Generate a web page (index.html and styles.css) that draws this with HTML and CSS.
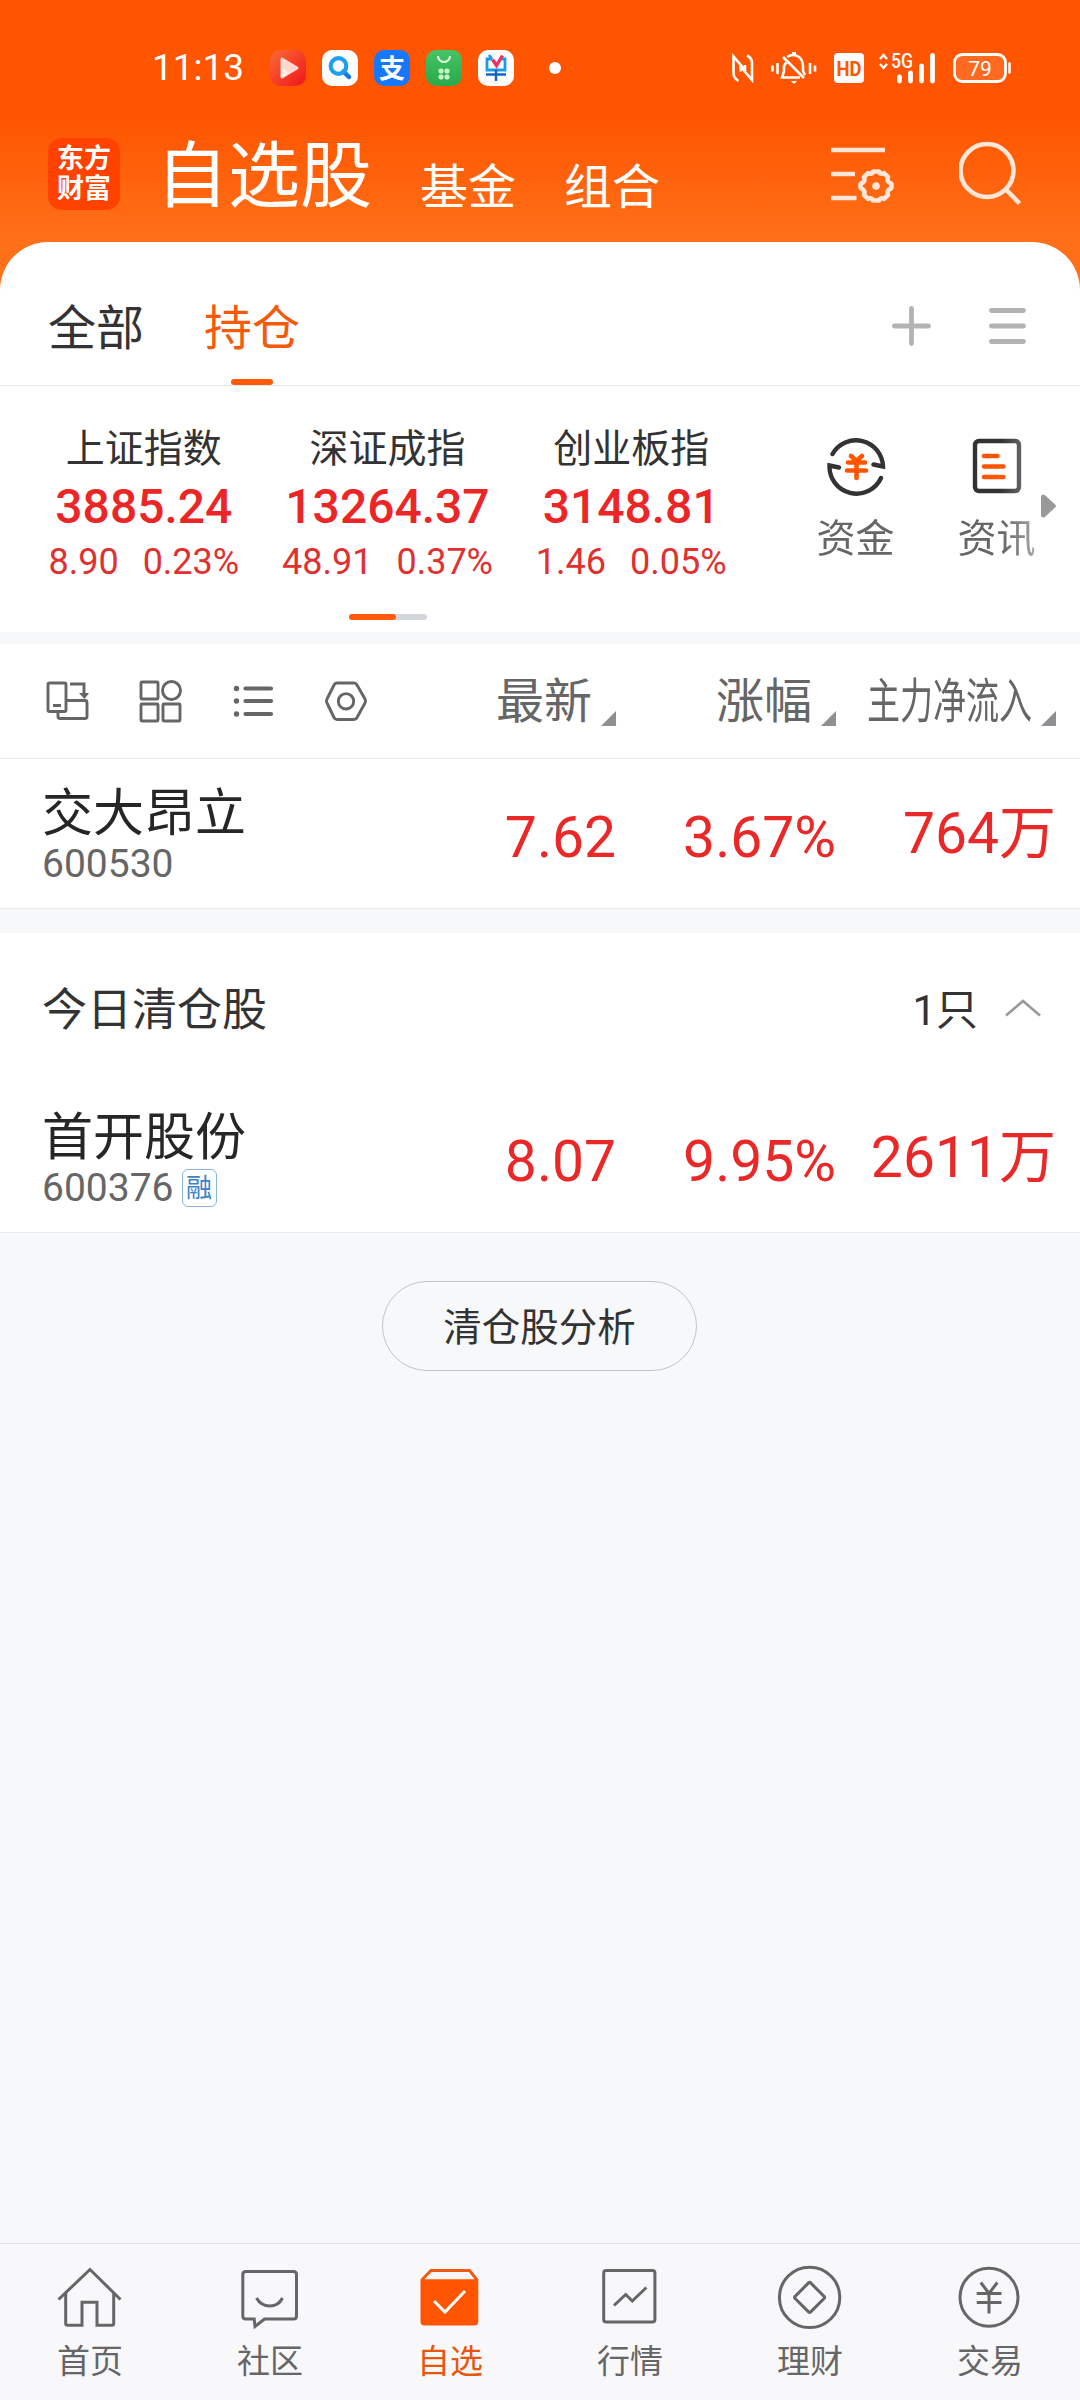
FILE: index.html
```html
<!DOCTYPE html>
<html lang="zh-CN">
<head>
<meta charset="utf-8">
<title>自选股</title>
<link rel="stylesheet" href="styles.css">
</head>
<body>
<div class="app">
  <div class="status">
    <span class="time">11:13</span>
    <div class="apps">
      <svg width="36" height="36" viewBox="0 0 36 36"><defs><linearGradient id="red" x1="0" y1="0" x2="1" y2="1"><stop offset="0" stop-color="#fb6a35"/><stop offset="1" stop-color="#f0151c"/></linearGradient><linearGradient id="grn" x1="0" y1="0" x2="0" y2="1"><stop offset="0" stop-color="#45c565"/><stop offset="1" stop-color="#2aa84c"/></linearGradient></defs><rect width="36" height="36" rx="10" fill="url(#red)"/><path d="M12 9 27 18 12 27Z" fill="#ffd9cf" stroke="#ffd9cf" stroke-width="3" stroke-linejoin="round"/><path d="M11 17 19 23 12 28Z" fill="#fff" opacity=".5"/></svg>
      <svg width="36" height="36" viewBox="0 0 36 36"><rect width="36" height="36" rx="10" fill="#fdfdfd"/><path d="m21.500 21.500 5.500 5.500" stroke="#1379e0" stroke-width="4.500" stroke-linecap="round"/><circle cx="16.500" cy="16" r="7.800" fill="none" stroke="#1ea0ee" stroke-width="4.200"/></svg>
      <svg width="36" height="36" viewBox="0 0 36 36"><rect width="36" height="36" rx="10" fill="#1677ff"/><text x="18" y="27.500" text-anchor="middle" class="pay-text">支</text></svg>
      <svg width="36" height="36" viewBox="0 0 36 36"><rect width="36" height="36" rx="10" fill="url(#grn)"/><path d="M12 6a6 6 0 0 0 12 0" fill="none" stroke="#e6f9e4" stroke-width="2"/><g fill="#c5f5c6"><rect x="12.500" y="18.500" width="5" height="5" rx="2"/><rect x="18.500" y="18.500" width="5" height="5" rx="2"/><rect x="12.500" y="24.500" width="5" height="5" rx="2"/><rect x="18.500" y="24.500" width="5" height="5" rx="2"/></g></svg>
      <svg width="36" height="36" viewBox="0 0 36 36"><rect width="36" height="36" rx="10" fill="#fff"/><path d="M14 9H9v11h18V9h-3M11 5l3 4" fill="none" stroke="#189be8" stroke-width="2.800"/><path d="M8 24.500H28M18 19.500V31" stroke="#1263c8" stroke-width="2.500"/><path d="m14.500 9.500 4 6 6-10" fill="none" stroke="#f03064" stroke-width="3.400"/></svg>
    </div>
    <i class="dot"></i>
    <div class="signals">
      <svg class="nfc" width="22" height="30" viewBox="0 0 22 30"><path d="M6.500 28Q1.500 25 1.500 20V3.500L13 17V12M15 2.500Q20 5 20 10V27L8.500 13.500V18.500" fill="none" stroke="#fff" stroke-width="2.600"/></svg>
      <svg class="bell" width="46" height="32" viewBox="0 0 46 32"><g fill="none" stroke="#fff" stroke-width="2.600"><path d="M1.500 13.500v6M6.500 11v11M39 11v11M44 13.500v6M16 5Q22 1 28 5 32 8 32 15V19L34 23M16 9 13 14V19L11 25.500H29M12 5 33 26"/></g><path d="M20 29h6l-3 3zM21 0h4v4h-4z" fill="#fff"/></svg>
      <svg class="hd" width="30" height="30" viewBox="0 0 30 30"><rect width="30" height="30" rx="4" fill="#fff"/><text x="15" y="23" text-anchor="middle" textLength="25" lengthAdjust="spacingAndGlyphs" class="hd-text">HD</text></svg>
      <svg class="net" width="57" height="31" viewBox="0 0 57 31"><path d="m1 6 3.500-4L8 6M1 11l3.500 4L8 11" fill="none" stroke="#fff" stroke-width="2.400"/><text x="12" y="14.500" textLength="22" lengthAdjust="spacingAndGlyphs" class="net-text">5G</text><path d="M20.500 24v4M31.500 20v8M42.500 13v15M53.500 2.500v25.500" stroke="#fff" stroke-width="4.800" stroke-linecap="round"/></svg>
      <svg class="battery" width="58" height="30" viewBox="0 0 58 30"><rect x="1.500" y="1.500" width="51" height="27" rx="8" fill="#ff6a20" stroke="#fff" stroke-width="2.800"/><path d="M56.500 10.500v9" stroke="#fff" stroke-width="2.500" stroke-linecap="round"/><text x="27" y="22.500" text-anchor="middle" class="bat-text">79</text></svg>
    </div>
  </div>

  <header class="header">
    <div class="logo"><span>东方</span><span>财富</span></div>
    <span class="title">自选股</span>
    <span class="head-tab">基金</span>
    <span class="head-tab">组合</span>
    <div class="head-icons">
      <svg width="64" height="60" viewBox="0 0 64 60" fill="none" stroke="#ffe6d8" stroke-width="4.600"><path d="M0 6H54M0 30H24M0 54H25.500"/><path stroke-width="4.600" stroke-linejoin="round" d="M37 29.200Q41 31 42 27.500H48Q49 31 53 29.200L57 33Q55.500 36.500 58 38.500 61 39.500 60.500 42 61 44.500 58 45.500 55.500 47.500 57 51L53 54.800Q49 53 48 56.500H42Q41 53 37 54.800L33 51Q34.500 47.500 32 45.500 29 44.500 29.500 42 29 39.500 32 38.500 34.500 36.500 33 33Z"/><circle cx="45" cy="42" r="3.800" fill="#ffe6d8" stroke="none"/></svg>
      <svg width="64" height="66" viewBox="0 0 64 66" fill="none" stroke="#ffe6d8" stroke-width="4.600"><circle cx="28" cy="30.500" r="26.500"/><path d="m47 49.500 13.500 14"/></svg>
    </div>
  </header>

  <main>
    <nav class="tabs">
      <span class="tab">全部</span>
      <span class="tab active">持仓</span>
      <svg class="tab-icons" width="136" height="40" viewBox="0 0 136 40" stroke="#b3b3b3" stroke-width="4.800" stroke-linecap="round"><path d="M2.400 20H36.500M19.500 2.500V37.500M99.400 4.500H131.500M99.400 20H131.500M99.400 35.500H131.500"/></svg>
    </nav>

    <section class="market">
      <div class="indexes">
        <div class="index"><span class="index-name">上证指数</span><b>3885.24</b><p><span>8.90</span><span>0.23%</span></p></div>
        <div class="index"><span class="index-name">深证成指</span><b>13264.37</b><p><span>48.91</span><span>0.37%</span></p></div>
        <div class="index"><span class="index-name">创业板指</span><b>3148.81</b><p><span>1.46</span><span>0.05%</span></p></div>
        <div class="pager"><i></i></div>
      </div>
      <div class="shortcuts">
        <div class="shortcut">
          <svg width="60" height="60" viewBox="0 0 60 60" fill="none" stroke="#333" stroke-width="4.400" stroke-linecap="round"><path d="M6.500 18A27 27 0 0 1 57 30.500L47.500 28.500M55 42A27 27 0 0 1 3.500 29.500L13 31.500"/><path stroke="#ff5500" stroke-width="4.600" d="m25 20 5.500 5 5.500-5M22 26.500H39M21 34.500H40M30.500 26V42"/></svg>
          <span>资金</span>
        </div>
        <div class="shortcut">
          <svg width="60" height="60" viewBox="0 0 60 60" fill="none" stroke="#333" stroke-width="4.400"><rect x="8" y="5" width="44" height="50" rx="4"/><path stroke="#ff5500" stroke-width="4.600" stroke-linecap="round" d="M17 20H30.500M17 30.500H36.500M17 41H36.500"/></svg>
          <span>资讯</span>
        </div>
      </div>
      <svg class="more" width="15" height="24" viewBox="0 0 15 24"><path d="M0 2Q2-1 5 2L14 10.500Q16 12 14 13.500L5 22Q2 25 0 22Z" fill="#999"/></svg>
    </section>

    <section class="holdings">
      <div class="cols list-head">
        <svg class="tools" width="324" height="44" viewBox="0 0 324 44" fill="none" stroke="#666" stroke-width="2.900"><rect x="2" y="4" width="18" height="28.500" rx="1.500"/><path d="M7 26.500H15M24 5H38V15M21 21.500H39Q41 21.500 41 23.500V37.500Q41 39.500 39 39.500H14Q12 39.500 12 37.500V33"/><path d="M33 14H43L38.500 20Z" fill="#666" stroke="none"/><rect x="95" y="3" width="17" height="17" rx="1"/><circle cx="125.500" cy="11.500" r="9"/><rect x="95" y="25" width="17" height="17" rx="1"/><rect x="117" y="25" width="17" height="17" rx="1"/><g stroke-width="4.200" stroke-linecap="round"><path d="M199.500 9.500H225M199.500 22H225M199.500 35H225"/></g><g fill="#666" stroke="none"><circle cx="190.500" cy="9.500" r="2.700"/><circle cx="190.500" cy="22" r="2.700"/><circle cx="190.500" cy="35" r="2.700"/></g><path stroke-linejoin="round" d="M291 4H308Q310 4 311 6L319 20Q320 22 319 24L311 38.500Q310 40.500 308 40.500H291Q289 40.500 288 38.500L281 24Q280 22 281 20L288 6Q289 4 291 4Z"/><circle cx="300" cy="22.300" r="7.700"/></svg>
        <div class="col-name"><span>最新</span><i class="sort"></i></div>
        <div class="col-name"><span>涨幅</span><i class="sort"></i></div>
        <div class="col-name"><div class="squeeze"><span>主力净流入</span></div><i class="sort"></i></div>
      </div>
      <div class="cols stock">
        <div class="who"><span class="stock-name">交大昂立</span><div class="code">600530</div></div>
        <span class="val">7.62</span><span class="val">3.67%</span><span class="val flow">764万</span>
      </div>
    </section>

    <section class="cleared">
      <div class="cleared-head"><span>今日清仓股</span><span class="count">1只</span><svg width="36" height="18" viewBox="0 0 36 18" fill="none" stroke="#999" stroke-width="2.600"><path d="M1 16.500 18 2 35 16.500"/></svg></div>
      <div class="cols stock">
        <div class="who"><span class="stock-name">首开股份</span><div class="code">600376<span class="badge">融</span></div></div>
        <span class="val">8.07</span><span class="val">9.95%</span><span class="val flow">2611万</span>
      </div>
    </section>

    <button class="analyse">清仓股分析</button>
  </main>

  <footer class="nav">
    <div class="nav-item"><svg viewBox="0 0 180 96"><path d="M58.500 55.500 90 25.500 120.500 55.500M65.700 49V79.500Q65.700 81.300 67.500 81.300H82V58.300H97V81.300H112Q113.700 81.300 113.700 79.500V49"/></svg><span>首页</span></div>
    <div class="nav-item"><svg viewBox="0 0 180 96"><path d="M66 27.500H113.500Q116.500 27.500 116.500 30.500V72Q116.500 75 113.500 75H84.500L75 82.500 74.200 75H66Q62.800 75 62.800 72V30.500Q62.800 27.500 66 27.500ZM76.500 54Q81 62 89.700 62 98.500 62 102.500 54"/></svg><span>社区</span></div>
    <div class="nav-item on"><svg viewBox="0 0 180 96"><path d="M61.800 36 71 26.400H109.500L117 36" fill="none" stroke="#f05a10"/><path d="M60.500 35.300H118.300V77.500Q118.300 81.500 114.300 81.500H64.500Q60.500 81.500 60.500 77.500Z" fill="#ff5500" stroke="none"/><path d="M74 57 85 68 105 47" stroke="#fff"/></svg><span>自选</span></div>
    <div class="nav-item"><svg viewBox="0 0 180 96"><rect x="63.700" y="26.500" width="51.200" height="51.500" rx="2.500"/><path d="M74 61.500 85.700 50.500 92.300 57 106.400 43.500"/></svg><span>行情</span></div>
    <div class="nav-item"><svg viewBox="0 0 180 96"><circle cx="89.600" cy="53.400" r="30.200"/><rect x="78.600" y="42.400" width="22" height="22" rx="1.500" transform="rotate(45 89.600 53.400)"/></svg><span>理财</span></div>
    <div class="nav-item"><svg viewBox="0 0 180 96"><circle cx="89" cy="53.300" r="29"/><path d="M80.800 38.500 89 49.500 97.300 38.500M76.700 49.500H101.500M76.700 58.500H101.500M89 49V69.500"/></svg><span>交易</span></div>
  </footer>
</div>
</body>
</html>
```

FILE: styles.css
```css
* { box-sizing: border-box; margin: 0; padding: 0; }
body { font-family: Roboto, "Noto Sans CJK SC", sans-serif; color: #333; }
svg { display: block; flex: none; }
.app {
  width: 1080px; height: 2400px; display: flex; flex-direction: column; overflow: hidden;
  background: linear-gradient(#ff5500 0, #ff5500 118px, #ff7019 240px) 0 0 / 100% 300px no-repeat, #f7f8fa;
}

/* status bar */
.status { height: 136px; display: flex; align-items: center; padding: 0 69px 0 152px; }
.time { width: 118px; font-size: 37px; line-height: 44px; color: #fff; }
.apps { display: flex; gap: 16px; }
.dot { width: 12px; height: 12px; border-radius: 50%; background: #fff; margin-left: 35px; }
.signals { display: flex; align-items: center; margin-left: auto; }
.bell { margin-left: 17px; }
.hd { margin-left: 17px; }
.net { margin-left: 15px; overflow: visible; }
.battery { margin-left: 17px; }
.pay-text { font-size: 26px; font-weight: 700; fill: #fff; }
.hd-text { font-size: 21px; font-weight: 700; fill: #ff5500; }
.net-text { font-size: 20px; fill: #fff; font-weight: 500; }
.bat-text { font-size: 21px; fill: #fff; }

/* header */
.header { height: 106px; display: flex; align-items: flex-start; padding: 0 57px 0 48px; color: #fff; }
.logo {
  width: 72px; height: 72px; margin-top: 2px; border-radius: 14px; background: #ff4200;
  display: flex; flex-direction: column; align-items: center; justify-content: center;
  font-size: 27px; line-height: 30px; font-weight: 700;
}
.title { margin-left: 36px; padding-top: 1px; font-size: 72px; line-height: 80px; }
.head-tab { margin-left: 48px; padding-top: 22px; font-size: 48px; line-height: 60px; }
.head-icons { margin-left: auto; display: flex; gap: 64px; padding-top: 8px; }
.head-icons svg:last-child { margin-top: -4px; }

/* white sheet */
main { flex: 1; display: flex; flex-direction: column; }
.tabs {
  height: 144px; display: flex; align-items: center; padding: 0 52px 0 48px; gap: 60px;
  background: #fff; border-radius: 48px 48px 0 0; border-bottom: 1px solid #e6e6e6;
}
.tab { position: relative; height: 143px; font-size: 48px; line-height: 173px; }
.tab.active { color: #f55a0a; }
.tab.active::after {
  content: ""; position: absolute; left: 27px; bottom: 0; width: 42px; height: 6px;
  border-radius: 3px; background: #ff5a0a;
}
.tab-icons { margin: 24px 0 0 auto; }

.market { position: relative; height: 246px; display: flex; padding: 38px 0 0 22px; background: #fff; }
.indexes { width: 731px; display: grid; grid-template-columns: repeat(3, 1fr); align-content: start; }
.index { display: flex; flex-direction: column; align-items: center; }
.index-name { font-size: 39px; line-height: 50px; }
.index b { margin-top: 5px; font-size: 48px; line-height: 56px; font-weight: 500; color: #ec2626; }
.index p { margin-top: 5px; display: flex; gap: 24px; font-size: 36px; line-height: 44px; color: #e03030; }
.pager { grid-column: 1 / -1; justify-self: center; width: 78px; height: 6px; margin-top: 30px; border-radius: 3px; background: #d3d7dd; }
.pager i { display: block; width: 47px; height: 6px; border-radius: 3px; background: #ff5a0a; }
.shortcuts {
  margin-left: 32px; display: grid; grid-template-columns: 141px 141px; align-content: start; padding-top: 12px;
  -webkit-mask-image: linear-gradient(90deg, #000 216px, transparent 300px);
  mask-image: linear-gradient(90deg, #000 216px, transparent 300px);
}
.shortcut { display: flex; flex-direction: column; align-items: center; }
.shortcut span { margin-top: 23px; font-size: 39px; line-height: 40px; color: #666; }
.more { position: absolute; right: 24px; top: 108px; }

/* stock lists */
.holdings { margin-top: 12px; }
.cols { display: grid; grid-template-columns: 1fr 220px 220px 220px; background: #fff; padding: 0 24px 0 42px; }
.list-head { height: 115px; align-items: center; border-bottom: 1px solid #ebebeb; color: #666; padding-left: 46px; }
.col-name { display: flex; justify-content: flex-end; align-items: center; gap: 9px; font-size: 48px; line-height: 60px; white-space: nowrap; }
.col-name span { display: block; padding-top: 2px; }
.sort { width: 15px; height: 15px; margin-top: 35px; background: #8e8e93; clip-path: polygon(100% 0, 100% 100%, 0 100%); }
.squeeze { width: 165px; display: flex; justify-content: flex-end; }
.squeeze span { flex: none; transform: scaleX(.688); transform-origin: 100% 50%; }
.stock { height: 150px; border-bottom: 1px solid #e9eaec; }
.who { padding-top: 25px; }
.stock-name { display: block; font-size: 51px; line-height: 60px; color: #262626; white-space: nowrap; }
.code { display: flex; align-items: center; height: 41px; font-size: 39px; line-height: 41px; color: #666; }
.badge {
  width: 35px; height: 38px; margin: -2px 0 0 8px; border: 1.500px solid #8db4dc; border-radius: 6px;
  font-size: 26px; line-height: 37px; text-align: center; color: #3c82ca;
}
.val { padding-top: 49px; font-size: 57px; line-height: 60px; text-align: right; color: #eb2828; white-space: nowrap; }
.flow { padding-top: 45px; }
.cleared { margin-top: 24px; }
.cleared-head { height: 150px; display: flex; align-items: center; padding: 6px 39px 0 42px; background: #fff; font-size: 45px; line-height: 60px; }
.count { margin: 0 27px 0 auto; font-size: 42px; }
.cleared-head svg { margin-top: -7px; }
.analyse {
  width: 315px; height: 90px; margin: 48px 0 0 382px; padding-top: 3px; border: 1px solid #c4c4c6; border-radius: 45px;
  background: transparent; font: 38.500px/84px Roboto, "Noto Sans CJK SC", sans-serif; color: #333;
}

/* bottom navigation */
.nav { height: 157px; display: grid; grid-template-columns: repeat(6, 180px); background: #f8f8fb; border-top: 1px solid #e4e4e6; }
.nav-item { text-align: center; font-size: 33px; line-height: 40px; color: #666; }
.nav-item svg { width: 180px; height: 96px; fill: none; stroke: #666; stroke-width: 3px; }
.nav-item span { display: block; margin-top: 2px; }
.on { color: #e8560c; }
```
